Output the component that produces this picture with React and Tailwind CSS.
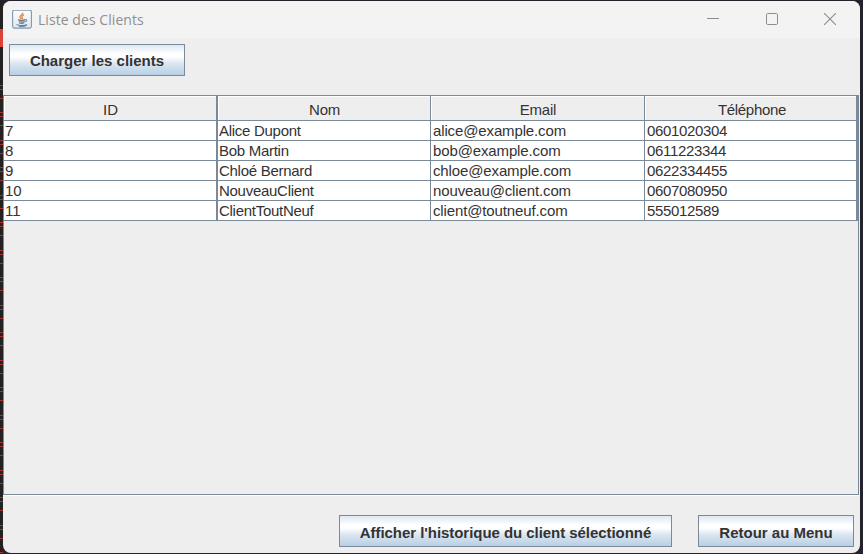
const clients = [
  ['7', 'Alice Dupont', 'alice@example.com', '0601020304'],
  ['8', 'Bob Martin', 'bob@example.com', '0611223344'],
  ['9', 'Chloé Bernard', 'chloe@example.com', '0622334455'],
  ['10', 'NouveauClient', 'nouveau@client.com', '0607080950'],
  ['11', 'ClientToutNeuf', 'client@toutneuf.com', '555012589'],
];
const headers = ['ID', 'Nom', 'Email', 'Téléphone'];
const edges = ['border-r-2', 'border-r', 'border-r', 'border-r-2'];
const cellText = [
  'pl-px',
  'pl-px tracking-[-0.28px]',
  'pl-0.5 tracking-[-0.13px]',
  'pl-0.5 tracking-[-0.34px]',
];
const headerText = ['', 'tracking-[-0.3px]', 'tracking-[-0.2px]', 'tracking-[-0.3px] pl-0.5'];
const columns = 'grid grid-cols-[214px_213px_214px_213px]';

function SwingButton({ children, className }) {
  return (
    <button
      className={`h-8 shrink-0 whitespace-nowrap border border-[#7a8a99] bg-linear-[to_bottom,#dde8f3_0%,#ffffff_30%,#ffffff_40%,#dbe6f1_62%,#b8cfe5_100%] text-[15px] leading-5 font-bold ${className}`}
    >
      {children}
    </button>
  );
}

function JavaIcon() {
  return (
    <svg width="20" height="20" viewBox="0 0 20 20" fill="none">
      <defs>
        <linearGradient id="tile" x1="0" y1="0" x2="0" y2="1">
          <stop offset="0" stopColor="#ffffff" />
          <stop offset="1" stopColor="#dfe5ea" />
        </linearGradient>
      </defs>
      <rect x="0.6" y="0.1" width="18.8" height="18" rx="1.8" fill="url(#tile)" stroke="#7f97ab" strokeWidth="1.1" />
      <path d="M10.6 2.6c1.2 1.6-2.8 2.4-2.6 4.2.1 1 1 1.4 1.1 2.3M12 5c-1.7.5-2.4 1.2-1.9 2.1.5.7.4 1.3-.1 1.8" stroke="#ed8a3c" strokeWidth="1.4" />
      <path d="M6 9.4h7.2l-.9 3.8H7.4z" fill="#8fa6ba" />
      <path d="M6 9.8c1.5.6 5.4.6 7 0M7.2 12.9c1.4.5 3.4.5 4.8 0M13 9.8c2.3-.6 2.1 1.8-.4 2.2M4.6 14.4c1.6 1.5 8.7 1.5 10.5-.1M7 16.2c2.5.4 5.5.2 7.5-.6" stroke="#66829d" strokeWidth="1.1" />
    </svg>
  );
}

export default function App() {
  return (
    <div className="flex h-[554px] w-[863px] overflow-hidden bg-[#24232c] font-['Liberation_Sans',Arial,sans-serif] text-[#333333]">
      <div className="flex w-[3px] shrink-0 flex-col overflow-hidden bg-[#242122]">
        <div className="h-[29px] shrink-0" />
        <div className="h-[18px] shrink-0 bg-[#df4037]" />
        <div className="h-[36px] shrink-0" />
        {Array.from({ length: 18 }, (_, i) => (
          <div key={i} className={`flex shrink-0 flex-col ${i % 2 ? 'h-[28px]' : 'h-[27px]'}`}>
            <div className="mt-[2px] h-px shrink-0 bg-[#a33430]" />
            <div className="mt-[3px] h-px shrink-0 bg-[#a33430]" />
            <div className="mt-[8px] h-px shrink-0 bg-[#a33430]" />
          </div>
        ))}
      </div>

      <div className="mt-px mb-px flex w-[857px] shrink-0 flex-col overflow-hidden rounded-[8px] bg-[#eeeeee]">
        <header className="flex h-[37px] shrink-0 items-center bg-[#f3f3f3] pl-[9px] text-[#8f8f8f]">
          <JavaIcon />
          <h1 className="ml-1.5 w-[120px] whitespace-nowrap font-['Open_Sans','Noto_Sans',sans-serif] text-[14px] leading-5 tracking-[0.06px]">Liste des Clients</h1>
          <div className="mr-[24px] ml-auto flex items-center gap-[46px] pb-px">
            <svg className="-ml-px" width="13" height="12" viewBox="0 0 13 12"><path d="M0 5.5h12" stroke="#8d8d8d" /></svg>
            <svg width="13" height="12" viewBox="0 0 13 12" fill="none"><rect x="0.5" y="0.5" width="11" height="11" rx="1.2" stroke="#8d8d8d" /></svg>
            <svg className="-ml-px" width="12" height="12" viewBox="0 0 12 12"><path d="M0 0l12 12M12 0L0 12" stroke="#8d8d8d" strokeWidth="1.1" /></svg>
          </div>
        </header>

        <div className="h-[57px] shrink-0 px-1.5 pt-1.5">
          <SwingButton className="w-[176px] pt-0.5">Charger les clients</SwingButton>
        </div>

        <main className="h-[400px] w-[856px] shrink-0 border border-[#7a8a99]">
          <div className={`${columns} h-[25px]`}>
            {headers.map((h, i) => (
              <div key={h} className={`border-b border-[#7a8a99] ${edges[i]}`}>
                <div className={`flex h-full items-center justify-center border-t border-l border-white pt-[3px] text-[15px] leading-5 ${headerText[i]}`}>{h}</div>
              </div>
            ))}
          </div>
          {clients.map((row) => (
            <div key={row[0]} className={`${columns} h-5`}>
              {row.map((cell, i) => (
                <div key={i} className={`border-b border-[#7a8a99] bg-white text-[15px] leading-[19px] whitespace-nowrap ${edges[i]} ${cellText[i]}`}>
                  {cell}
                </div>
              ))}
            </div>
          ))}
        </main>
        <div className="h-px w-[856px] shrink-0 bg-white" />

        <footer className="flex justify-end gap-[26px] pt-[19px] pr-1.5">
          <SwingButton className="w-[333px] pt-[3px] tracking-[-0.05px]">Afficher l'historique du client sélectionné</SwingButton>
          <SwingButton className="w-[156px] pt-[3px]">Retour au Menu</SwingButton>
        </footer>
      </div>
    </div>
  );
}
